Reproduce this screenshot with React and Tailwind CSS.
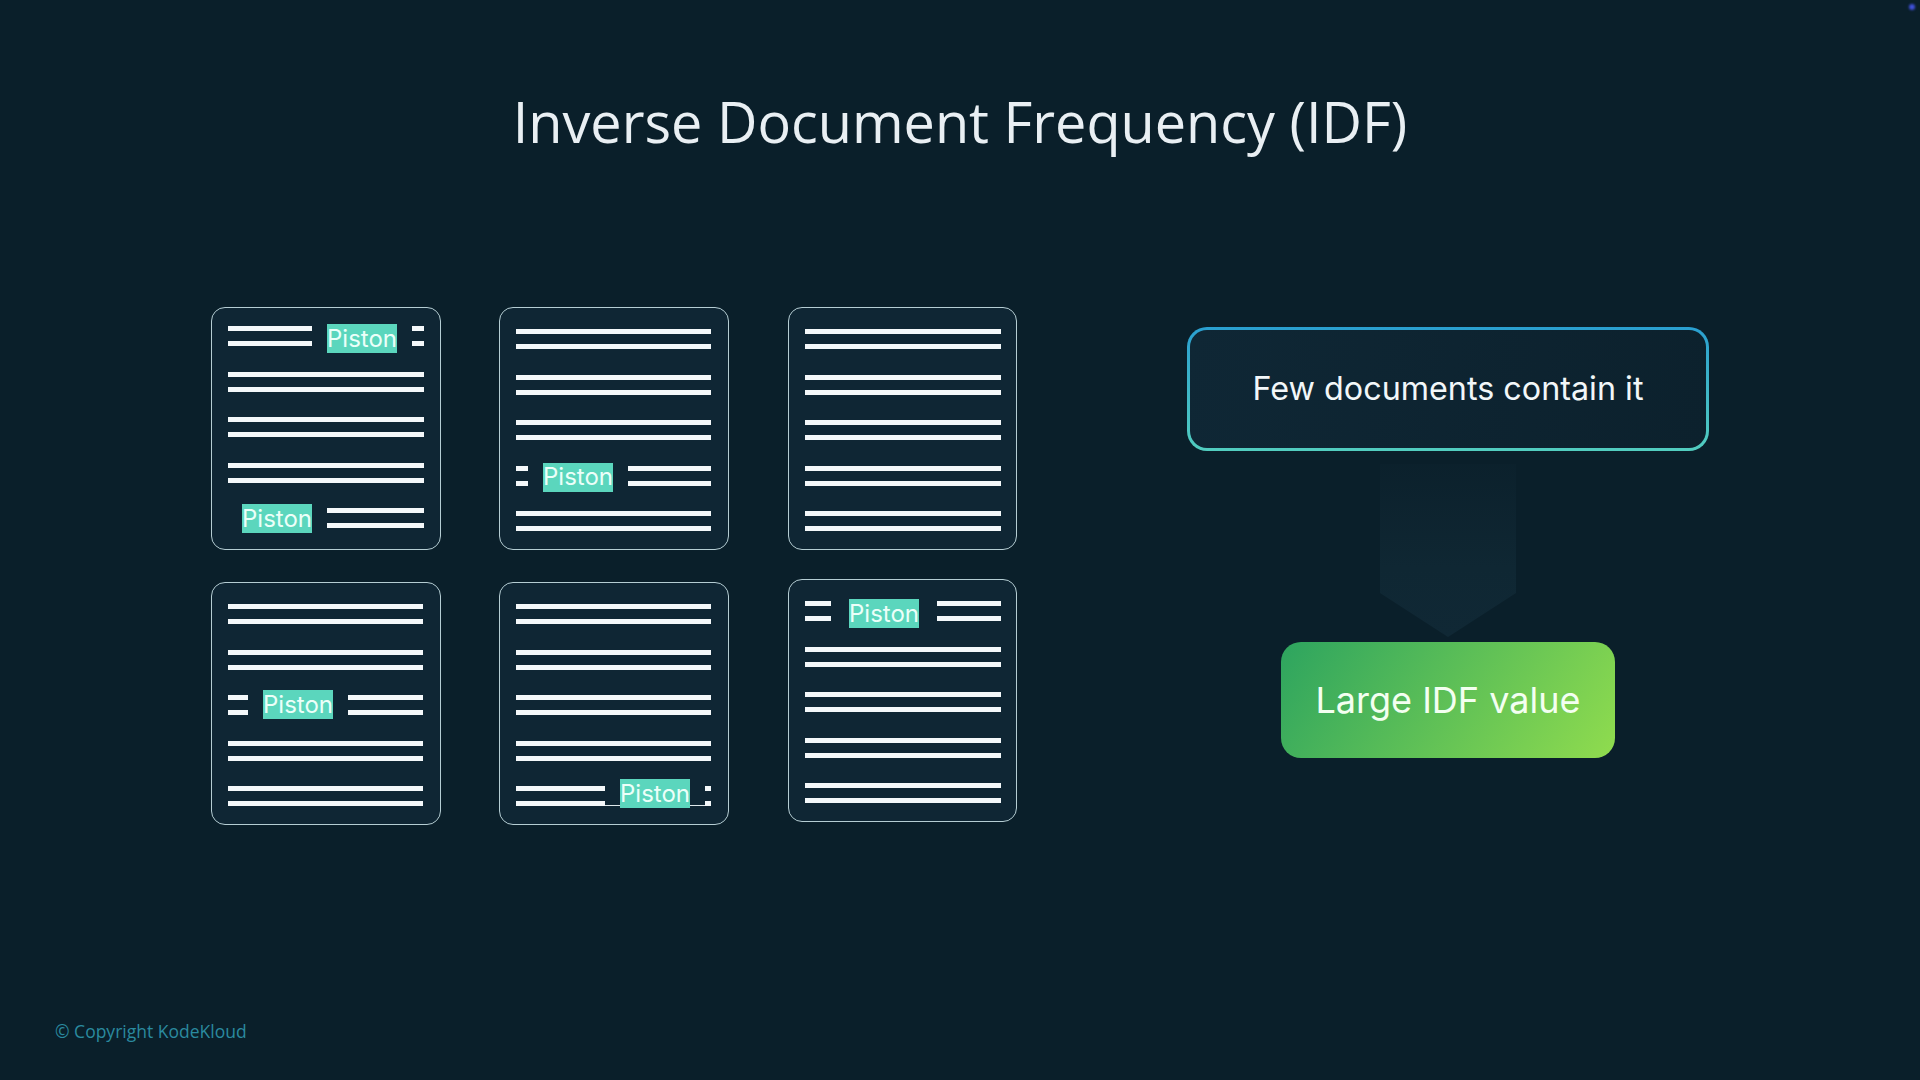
const Pair = ({ className }) => (
  <div className={`flex h-full flex-col justify-between ${className}`}>
    <div className="h-[5px] bg-[#f4f8fa]" />
    <div className="h-[5px] bg-[#f4f8fa]" />
  </div>
);

const Chip = ({ className = "" }) => (
  <div className={`relative z-10 flex h-[29px] w-[70px] shrink-0 items-center justify-center bg-[#5bd6bd] font-['Inter',sans-serif] text-[24px] leading-none text-[#ecfff9] ${className}`}>
    Piston
  </div>
);

const Row = ({ children, className = "" }) => (
  <div className={`relative flex h-[20px] items-start ${className}`}>{children}</div>
);

const Card = ({ children, className = "" }) => (
  <div className={`box-border flex h-[243px] flex-col gap-[25.5px] rounded-[14px] border border-[#b5cdd3] bg-[#0f2634] pl-[16px] ${className}`}>
    {children}
  </div>
);

const Plain = () => (
  <Row>
    <Pair className="flex-1" />
  </Row>
);

export default function App() {
  return (
    <div className="relative flex h-[1080px] w-[1920px] flex-col overflow-hidden bg-[#0a1f2a] font-['Open_Sans',sans-serif]">
      <div className="absolute right-[5px] top-[4px] h-[6px] w-[6px] rounded-full bg-[#3f50d8] blur-[1px]" />

      <h1 className="flex h-[307px] justify-center pt-[85px] text-[55.8px] font-normal leading-[72px] text-[#e9eff3]">
        Inverse Document Frequency (IDF)
      </h1>

      <main className="flex pl-[211px]">
        <div className="grid grid-cols-[230px_230px_230px] grid-rows-[243px_243px] gap-x-[58px] gap-y-[32px]">
          <Card className="pr-[16px] pt-[18px]">
            <Row className="gap-[15px]">
              <Pair className="w-[84px]" />
              <Chip className="-mt-[2px]" />
              <Pair className="flex-1" />
            </Row>
            <Plain />
            <Plain />
            <Plain />
            <Row className="gap-[15px] pl-[14px]">
              <Chip className="-mt-[4px]" />
              <Pair className="flex-1" />
            </Row>
          </Card>

          <Card className="pr-[17px] pt-[21px]">
            <Plain />
            <Plain />
            <Plain />
            <Row className="gap-[15px]">
              <Pair className="w-[12px]" />
              <Chip className="-mt-[3px]" />
              <Pair className="flex-1" />
            </Row>
            <Plain />
          </Card>

          <Card className="ml-[1px] pr-[15px] pt-[21px]">
            <Plain />
            <Plain />
            <Plain />
            <Plain />
            <Plain />
          </Card>

          <Card className="pr-[17px] pt-[21px]">
            <Plain />
            <Plain />
            <Row className="gap-[15px]">
              <Pair className="w-[20px]" />
              <Chip className="-mt-[5px]" />
              <Pair className="flex-1" />
            </Row>
            <Plain />
            <Plain />
          </Card>

          <Card className="pr-[17px] pt-[21px]">
            <Plain />
            <Plain />
            <Plain />
            <Plain />
            <Row className="gap-[15px]">
              <Pair className="w-[89px]" />
              <Chip className="-mt-[7px]" />
              <Pair className="flex-1" />
              <div className="absolute bottom-0 left-[89px] right-[6px] h-px bg-[#dfe9ec]" />
            </Row>
          </Card>

          <Card className="-mt-[3px] ml-[1px] pr-[15px] pt-[21px]">
            <Row className="gap-[18px]">
              <Pair className="w-[26px]" />
              <Chip className="-mt-[2px]" />
              <Pair className="flex-1" />
            </Row>
            <Plain />
            <Plain />
            <Plain />
            <Plain />
          </Card>
        </div>

        <section className="ml-[170px] flex w-[522px] flex-col items-center pt-[20px] font-['Inter',sans-serif]">
          <div className="box-border flex h-[124px] w-full items-center justify-center rounded-[20px] border-[3px] border-transparent text-[32.3px] text-[#f2f7f9] [background:linear-gradient(100deg,#0f2735,#0c212d)_padding-box,linear-gradient(180deg,#2a9fd0,#52cdbf)_border-box]">
            Few documents contain it
          </div>
          <svg className="mt-[13px] h-[173px] w-[136px]" viewBox="0 0 136 173">
            <defs>
              <linearGradient id="arrowFade" x1="0" y1="0" x2="0" y2="1">
                <stop offset="0" stopColor="#0f2632" stopOpacity="0.25" />
                <stop offset="0.3" stopColor="#0f2632" stopOpacity="0.7" />
                <stop offset="0.6" stopColor="#0f2733" stopOpacity="1" />
                <stop offset="1" stopColor="#102835" stopOpacity="1" />
              </linearGradient>
            </defs>
            <polygon points="0,0 136,0 136,129 68,173 0,129" fill="url(#arrowFade)" />
          </svg>
          <div className="mt-[5px] flex h-[116px] w-[334px] items-center justify-center rounded-[20px] bg-[linear-gradient(125deg,#2da45f,#90dc4e)] text-[36px] text-[#f3fff1]">
            Large IDF value
          </div>
        </section>
      </main>

      <footer className="mt-auto pb-[36px] pl-[55px] text-[17.5px] leading-[25px] text-[#2a8a9f]">
        © Copyright KodeKloud
      </footer>
    </div>
  );
}
